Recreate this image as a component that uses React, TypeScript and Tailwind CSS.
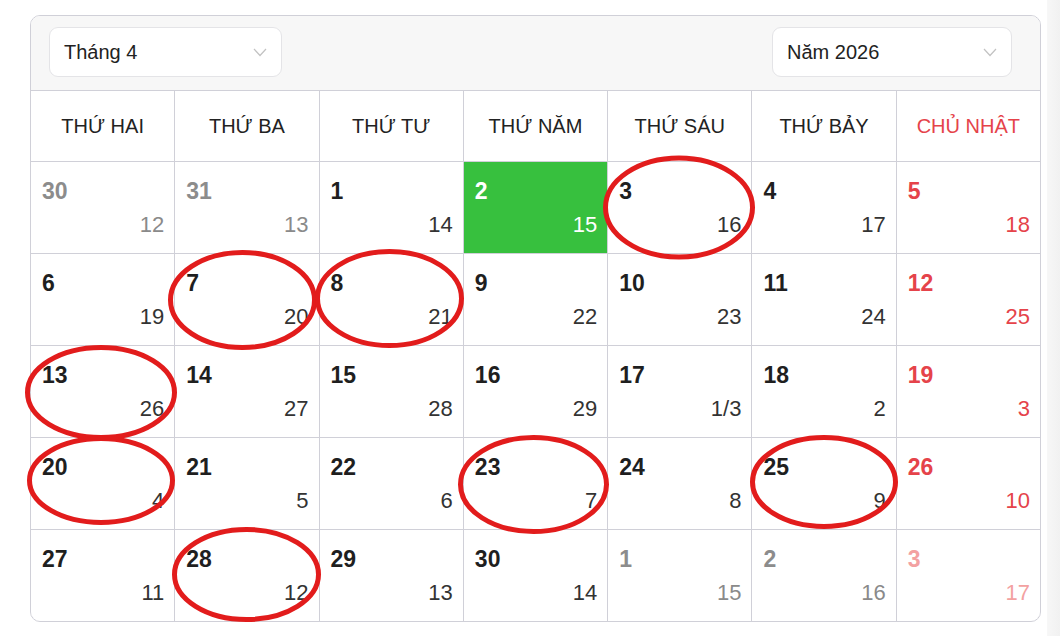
type Day = { d: number; l: string; out?: boolean };

const WEEKDAYS = ["THỨ HAI", "THỨ BA", "THỨ TƯ", "THỨ NĂM", "THỨ SÁU", "THỨ BẢY", "CHỦ NHẬT"];

const lunar = [
  "12", "13", "14", "15", "16", "17", "18",
  "19", "20", "21", "22", "23", "24", "25",
  "26", "27", "28", "29", "1/3", "2", "3",
  "4", "5", "6", "7", "8", "9", "10",
  "11", "12", "13", "14", "15", "16", "17",
];

const days: Day[] = lunar.map((l, i) => {
  if (i < 2) return { d: 30 + i, l, out: true };
  const n = i - 1;
  if (n > 30) return { d: n - 30, l, out: true };
  return { d: n, l };
});

// annotation marks drawn over the calendar
const marks = [
  { cx: 679, cy: 207.5, rx: 73.5, ry: 49.5 },
  { cx: 242.5, cy: 300, rx: 72, ry: 47.5 },
  { cx: 389.5, cy: 298.5, rx: 72, ry: 47 },
  { cx: 101, cy: 392.5, rx: 73.5, ry: 45 },
  { cx: 101, cy: 480.5, rx: 71.5, ry: 42 },
  { cx: 533.5, cy: 484.5, rx: 73, ry: 47 },
  { cx: 824, cy: 482, rx: 71.5, ry: 44.5 },
  { cx: 246.5, cy: 574.5, rx: 72, ry: 45 },
];

function Select({ label, width }: { label: string; width: string }) {
  return (
    <div
      className={`${width} flex h-[50px] items-center justify-between rounded-[9px] border border-[#e4e4e7] bg-white pl-[14px] pr-[14px] text-[20px] text-[#222]`}
    >
      <span>{label}</span>
      <svg width="14" height="9" viewBox="0 0 14 9" fill="none">
        <path d="M1 1l6 6.5L13 1" stroke="#c2c2c2" strokeWidth="1.2" />
      </svg>
    </div>
  );
}

function DayCell({ day, idx }: { day: Day; idx: number }) {
  const sunday = idx % 7 === 6;
  const today = !day.out && day.d === 2;

  let top = "text-[#1f1f1f]";
  let bottom = "text-[#333]";
  if (day.out) {
    top = sunday ? "text-[#f3a1a1]" : "text-[#8c8c8c]";
    bottom = sunday ? "text-[#f3a1a1]" : "text-[#8a8a8a]";
  } else if (sunday) {
    top = "text-[#e5434a]";
    bottom = "text-[#e5434a]";
  }
  if (today) {
    top = "text-white";
    bottom = "text-white";
  }

  return (
    <div
      className={`flex flex-col justify-between pb-[17px] pl-[11px] pr-[10px] pt-[18px] ${
        today ? "bg-[#37c03e]" : "bg-white"
      }`}
    >
      <span className={`text-[23px] font-bold leading-none ${top}`}>{day.d}</span>
      <span className={`self-end text-[22px] leading-none ${bottom}`}>{day.l}</span>
    </div>
  );
}

export default function App() {
  return (
    <div
      className="relative flex h-[636px] w-[1060px] bg-white"
      style={{ fontFamily: '"Liberation Sans", Arial, sans-serif' }}
    >
      <div className="w-[1047px] pl-[30px] pt-[15px]">
        <div className="w-[1011px] overflow-hidden rounded-[10px] border border-[#d0d0d8]">
          <div className="flex h-[75px] items-center justify-between border-b border-[#d0d0d8] bg-[#f7f7f7] pb-[2px] pl-[18px] pr-[28px]">
            <Select label="Tháng 4" width="w-[233px]" />
            <Select label="Năm 2026" width="w-[240px]" />
          </div>

          <div className="grid grid-cols-7 grid-rows-[70px_repeat(5,91px)] gap-px bg-[#d0d0d8]">
            {WEEKDAYS.map((w, i) => (
              <div
                key={w}
                className={`flex items-center justify-center bg-white text-[20px] ${
                  i === 6 ? "text-[#e5434a]" : "text-[#222]"
                }`}
              >
                {w}
              </div>
            ))}
            {days.map((day, i) => (
              <DayCell key={i} day={day} idx={i} />
            ))}
          </div>
        </div>
      </div>
      <div className="flex-1 bg-gradient-to-r from-[#f7f7f7] to-[#f1f1f1]" />

      <svg
        className="pointer-events-none absolute left-0 top-0"
        width={1060}
        height={636}
        viewBox="0 0 1060 636"
      >
        {marks.map((m, i) => (
          <ellipse
            key={i}
            cx={m.cx}
            cy={m.cy}
            rx={m.rx}
            ry={m.ry}
            fill="none"
            stroke="#e21c1c"
            strokeWidth={5}
          />
        ))}
      </svg>
    </div>
  );
}
